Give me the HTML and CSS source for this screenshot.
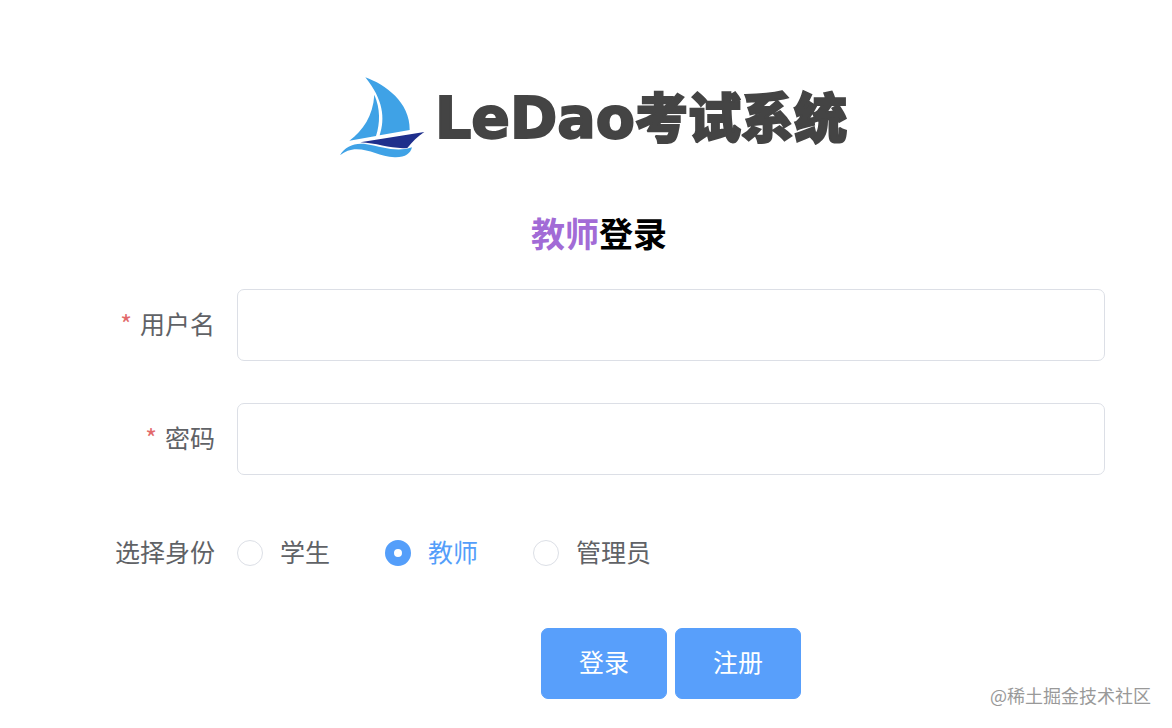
FILE: index.html
```html
<!DOCTYPE html>
<html lang="zh-CN">
<head>
<meta charset="utf-8">
<title>LeDao考试系统</title>
<link rel="stylesheet" href="styles.css">
</head>
<body>
<main class="login">
  <header class="brand">
    <svg class="brand-mark" viewBox="30 36 255 243" aria-hidden="true">
      <path fill="#3fa2e6" d="M106 37C165 58 241 112 239 195L149 211C166 160 160 104 106 37Z"/>
      <path fill="#3fa2e6" d="M133 89C151 130 151 174 138 213L58 227C99 196 129 153 133 89Z"/>
      <path fill="#1f2f8c" d="M91 232L283 201C263 214 247 230 232 249C185 253 142 234 91 232Z"/>
      <path fill="#3fa2e6" d="M30 271C46 244 75 232 110 238C157 246 201 263 246 247C241 266 226 278 194 277C150 275 120 253 80 253C60 253 45 260 30 271Z"/>
    </svg>
    <svg class="brand-name" viewBox="0 0 411 80" role="img" aria-label="LeDao考试系统">
      <text class="brand-latin" x="-2" y="60">LeDao</text>
      <text class="brand-cjk" x="198" y="60">考试系统</text>
    </svg>
  </header>
  <h1 class="title"><span class="title-role">教师</span>登录</h1>
  <form class="form">
    <div class="row">
      <label class="label required" for="user">用户名</label>
      <input class="field" id="user" type="text">
    </div>
    <div class="row">
      <label class="label required" for="pass">密码</label>
      <input class="field" id="pass" type="password">
    </div>
    <div class="row" role="radiogroup" aria-labelledby="role-label">
      <span class="label" id="role-label">选择身份</span>
      <div class="roles">
        <label class="role"><input class="radio" type="radio" name="role"><span class="role-text">学生</span></label>
        <label class="role"><input class="radio" type="radio" name="role" checked><span class="role-text">教师</span></label>
        <label class="role"><input class="radio" type="radio" name="role"><span class="role-text">管理员</span></label>
      </div>
    </div>
    <div class="actions">
      <button class="button" type="button">登录</button>
      <button class="button" type="button">注册</button>
    </div>
  </form>
</main>
<div class="watermark">@稀土掘金技术社区</div>
</body>
</html>
```
FILE: styles.css
```css
* {
  box-sizing: border-box;
}

body {
  margin: 0;
  background: #fff;
  color: #606266;
  font-family: "Noto Sans CJK SC", sans-serif;
  font-size: 25px;
  line-height: 36px;
}

.login {
  padding: 77px 67px 24px 93px;
}

.brand {
  display: flex;
  align-items: center;
  justify-content: center;
  gap: 12px;
  padding-right: 10px;
}

.brand-mark {
  width: 85px;
  height: 81px;
}

.brand-name {
  width: 411px;
  height: 80px;
  overflow: visible;
  fill: #444;
  stroke: #444;
  stroke-linejoin: miter;
  stroke-miterlimit: 2;
  font-weight: 900;
}

.brand-latin {
  font-family: "DejaVu Sans", sans-serif;
  font-size: 57px;
  stroke-width: 2px;
}

.brand-cjk {
  font-size: 53px;
  stroke-width: 2px;
}

.title {
  margin: 50px 0 31px;
  color: #000;
  font-size: 34px;
  line-height: 50px;
  text-align: center;
}

.title-role {
  color: #a26bd6;
}

.form {
  display: flex;
  flex-direction: column;
  gap: 42px;
}

.row {
  display: grid;
  grid-template-columns: 144px 1fr;
  align-items: center;
  min-height: 72px;
}

.label {
  padding: 0 22px 4px 0;
  text-align: right;
  white-space: nowrap;
}

.required::before {
  content: "*";
  margin-right: 8px;
  color: #e2696b;
}

.field {
  width: 100%;
  height: 72px;
  padding: 0 26px;
  border: 1px solid #dcdfe6;
  border-radius: 7px;
  background: #fff;
  color: inherit;
  font: inherit;
}

.roles {
  display: flex;
  gap: 55px;
}

.role {
  display: flex;
  align-items: center;
  gap: 17px;
}

.role-text {
  padding-bottom: 4px;
}

.role:has(.radio:checked) {
  color: #549efa;
}

.radio {
  appearance: none;
  width: 26px;
  height: 26px;
  margin: 0;
  border: 1px solid #dcdfe6;
  border-radius: 50%;
  background: #fff;
}

.radio:checked {
  border: 9px solid #549efa;
}

.actions {
  display: flex;
  justify-content: center;
  gap: 8px;
  margin-left: 144px;
  margin-top: -3px;
}

.button {
  padding: 14px 37px 19px;
  border: 1px solid #589ffb;
  border-radius: 7px;
  background: #589ffb;
  color: #fff;
  font: inherit;
}

.watermark {
  position: absolute;
  right: 21px;
  bottom: 20px;
  color: #999;
  font-size: 18px;
  line-height: 26px;
}
```
